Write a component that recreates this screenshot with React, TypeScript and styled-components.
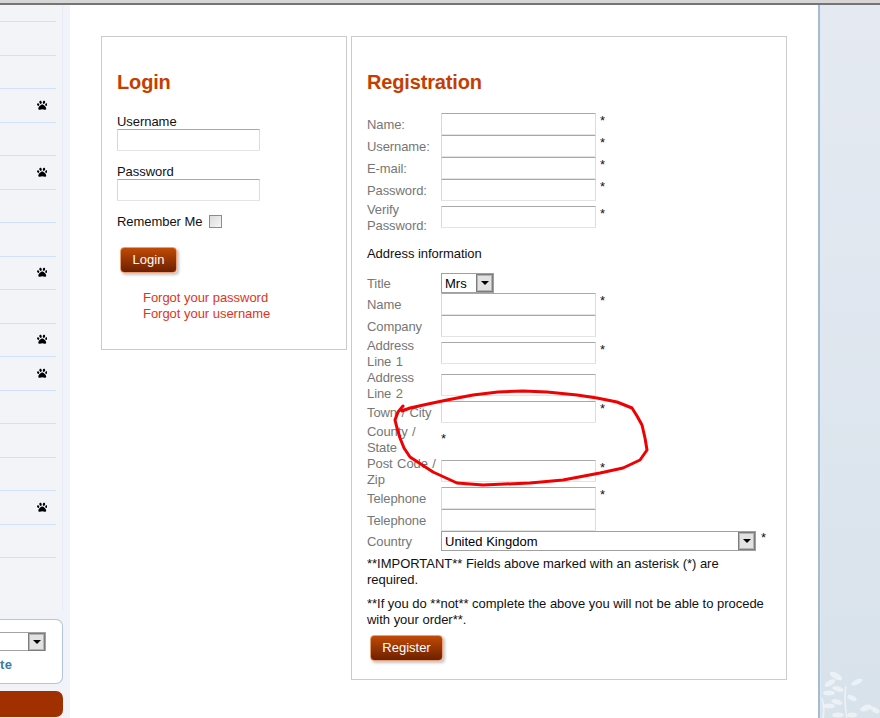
import React from "react";
import styled, { createGlobalStyle } from "styled-components";
import { FaPaw } from "react-icons/fa";

const Global = createGlobalStyle`
  html, body { margin: 0; padding: 0; background: #fff; overflow: hidden; }
  * { box-sizing: border-box; }
  #root { width: 880px; height: 718px; }
`;

const Page = styled.div`
  position: relative;
  width: 880px;
  height: 718px;
  display: flex;
  flex-direction: column;
  overflow: hidden;
  font-family: "Liberation Sans", Arial, sans-serif;
  font-size: 13px;
  line-height: 16px;
  color: #111;
`;

const TopBar = styled.div`
  flex: none;
  height: 5px;
  background: #d6d6d6;
  border-bottom: 2px solid #757575;
`;

const Body = styled.div`
  flex: 1;
  display: flex;
  min-height: 0;
`;

const Sidebar = styled.aside`
  flex: none;
  width: 70px;
  background: #f1f3f9;
  display: flex;
  flex-direction: column;
  overflow: hidden;
`;

const NavColumn = styled.div`
  width: 63px;
  height: 605px;
  flex: none;
  padding-top: 16px;
  background: #f2f4f8;
  border-right: 1px solid #e7ebf3;
`;

const NavList = styled.ul`
  list-style: none;
  margin: 0;
  padding: 0;
  width: 56px;
  border-top: 1px solid #d2e1fb;
`;

const NavRow = styled.li`
  height: 33.5px;
  border-bottom: 1px solid #d2e1fb;
  display: flex;
  align-items: center;
  justify-content: flex-end;
  padding-right: 9px;
  color: #000;
  font-size: 10.5px;
  & > svg { margin-bottom: 1px; }
`;

const Widget = styled.div`
  flex: none;
  width: 63px;
  height: 65px;
  margin-top: 9px;
  padding-top: 12px;
  background: #fff;
  border: 1px solid #b3c5d8;
  border-left: none;
  border-radius: 0 7px 7px 0;
`;

const WidgetSelect = styled.div`
  width: 46px;
  height: 19px;
  border: 1px solid #a3a3a3;
  border-left: none;
  display: flex;
  justify-content: flex-end;
`;

const WidgetLink = styled.div`
  margin-top: 6px;
  font-size: 13px;
  font-weight: 700;
  letter-spacing: 0.5px;
  color: #3a7aa8;
`;

const SideButton = styled.div`
  flex: none;
  width: 63px;
  height: 26px;
  margin-top: 7px;
  background: #a03000;
  border-radius: 0 7px 7px 0;
`;

const Main = styled.main`
  flex: 1;
  display: flex;
  align-items: flex-start;
  gap: 4px;
  padding: 31px 0 0 31px;
  background: #fff;
`;

const Panel = styled.section<{ $w: number; $h: number }>`
  flex: none;
  width: ${(p) => p.$w}px;
  height: ${(p) => p.$h}px;
  padding: 33px 15px 0;
  border: 1px solid #cbcbcb;
`;

const Heading = styled.h2`
  margin: 0;
  font-size: 20px;
  line-height: 24px;
  font-weight: 700;
  letter-spacing: -0.15px;
  color: #c63d00;
`;

const LoginLabel = styled.div<{ $top: number }>`
  height: 15px;
  margin-top: ${(p) => p.$top}px;
  color: #111;
  letter-spacing: -0.05px;
`;

const TextInput = styled.div<{ $w?: number }>`
  flex: none;
  width: ${(p) => p.$w ?? 155}px;
  height: 22px;
  background: #fff;
  border: 1px solid #e4e4e4;
  border-top-color: #a8a8a8;
  border-left-color: #d8d8d8;
  border-right-color: #dcdcdc;
  border-radius: 1px;
`;

const RememberRow = styled.div`
  margin-top: 12px;
  display: flex;
  align-items: center;
  gap: 7px;
  letter-spacing: -0.05px;
  & > span { position: relative; top: 1px; }
`;

const CheckBox = styled.div`
  width: 13px;
  height: 13px;
  background: linear-gradient(135deg, #dcdcdc, #f6f6f6);
  border: 1px solid #8c8c8c;
`;

const ActionButton = styled.div<{ $w: number; $left: number; $top: number }>`
  width: ${(p) => p.$w}px;
  height: 26px;
  margin-left: ${(p) => p.$left}px;
  margin-top: ${(p) => p.$top}px;
  display: flex;
  align-items: center;
  justify-content: center;
  color: #fff;
  background: linear-gradient(#c04a06, #6c2000);
  border: 1px solid #e8a078;
  border-radius: 4px;
  box-shadow: 2px 2px 3px #c4c4c4;
`;

const LinkList = styled.div`
  margin: 17px 0 0 26px;
  color: #e0351a;
  letter-spacing: -0.03px;
`;

const FormRow = styled.div<{ $h: number }>`
  height: ${(p) => p.$h}px;
  display: flex;
  align-items: center;
`;

const FieldLabel = styled.div`
  flex: none;
  width: 74px;
  margin-top: 2px;
  color: #767676;
  letter-spacing: -0.1px;
  word-spacing: 1px;
  white-space: nowrap;
`;

const Star = styled.span<{ $bare?: boolean }>`
  margin: ${(p) => (p.$bare ? "0" : "-6px 0 0 4px")};
  color: #111;
`;

const CountryStar = styled(Star)`
  margin-left: 5px;
`;

const SubHeading = styled.div`
  margin: 13px 0 11px;
  color: #111;
  letter-spacing: -0.05px;
`;

const SelectBox = styled.div<{ $w: number }>`
  flex: none;
  width: ${(p) => p.$w}px;
  height: 20px;
  padding-left: 3px;
  display: flex;
  align-items: center;
  justify-content: space-between;
  background: #fff;
  border: 1px solid #a0a0a0;
  color: #000;
  & > span { position: relative; top: 1px; }
`;

const ArrowBox = styled.div`
  flex: none;
  width: 17px;
  height: 18px;
  display: flex;
  align-items: center;
  justify-content: center;
  background: #e2e2e2;
  border: 1px solid #7c7c7c;
  outline: 1px solid #b4b4b4;
  outline-offset: -2px;
  &::after {
    content: "";
    border: 4px solid transparent;
    border-top: 4px solid #000;
    border-bottom: none;
  }
`;

const Note = styled.p<{ $top: number }>`
  margin: ${(p) => p.$top}px 0 0;
  color: #111;
  letter-spacing: -0.02px;
`;

const RightPanel = styled.aside`
  flex: none;
  width: 62px;
  display: flex;
  flex-direction: column;
  justify-content: flex-end;
  background: linear-gradient(#e5eaf2, #d8e2eb);
  border-left: 2px solid #a4bbd3;
  box-shadow: inset 1px 0 0 #dfe9f3;
`;

const Plant = styled.svg`
  display: block;
  width: 60px;
  height: 50px;
`;

const Scribble = styled.svg`
  position: absolute;
  left: 0;
  top: 0;
  pointer-events: none;
`;

const pawRows = new Set([2, 4, 7, 9, 10, 14]);

type Field = { label: React.ReactNode; h: number; star?: boolean; bareStar?: boolean };

const accountFields: Field[] = [
  { label: "Name:", h: 22, star: true },
  { label: "Username:", h: 22, star: true },
  { label: "E-mail:", h: 22, star: true },
  { label: "Password:", h: 22, star: true },
  { label: <>Verify<br />Password:</>, h: 32, star: true },
];

const Row = ({ label, h, star, bareStar }: Field) => (
  <FormRow $h={h}>
    <FieldLabel>{label}</FieldLabel>
    {bareStar ? <Star $bare>*</Star> : <TextInput />}
    {star && <Star>*</Star>}
  </FormRow>
);

const scribblePath =
  "M402 411 L410 408 L428 404 L447 400 L473 395 L498 392 L523 391 L547 392 L577 395 L597 398 L617 402 L632 408 L637 416 L642 425 L645 438 L647 450 L640 460 L623 468 L600 473 L563 480 L530 483 L483 485 L457 483 L433 472 L410 457 L404 448 L400 438 L397 428 L395 420 L398 412 L403 406";

export default function App() {
  return (
    <Page>
      <Global />
      <TopBar />
      <Body>
        <Sidebar>
          <NavColumn>
            <NavList>
              {Array.from({ length: 16 }, (_, i) => (
                <NavRow key={i}>{pawRows.has(i) && <FaPaw />}</NavRow>
              ))}
            </NavList>
          </NavColumn>
          <Widget>
            <WidgetSelect>
              <ArrowBox />
            </WidgetSelect>
            <WidgetLink>te</WidgetLink>
          </Widget>
          <SideButton />
        </Sidebar>
        <Main>
          <Panel $w={246} $h={314}>
            <Heading>Login</Heading>
            <LoginLabel $top={20}>Username</LoginLabel>
            <TextInput $w={143} />
            <LoginLabel $top={13}>Password</LoginLabel>
            <TextInput $w={143} />
            <RememberRow>
              <span>Remember Me</span> <CheckBox />
            </RememberRow>
            <ActionButton $w={57} $left={3} $top={18}>Login</ActionButton>
            <LinkList>
              <div>Forgot your password</div>
              <div>Forgot your username</div>
            </LinkList>
          </Panel>
          <Panel $w={436} $h={644}>
            <Heading>Registration</Heading>
            <div style={{ height: 19 }} />
            {accountFields.map((f, i) => <Row key={i} {...f} />)}
            <SubHeading>Address information</SubHeading>
            <FormRow $h={20}>
              <FieldLabel>Title</FieldLabel>
              <SelectBox $w={53}><span>Mrs</span><ArrowBox /></SelectBox>
            </FormRow>
            <Row label="Name" h={22} star />
            <Row label="Company" h={22} />
            <Row label={<>Address<br />Line 1</>} h={32} star />
            <Row label={<>Address<br />Line 2</>} h={32} />
            <Row label="Town / City" h={22} star />
            <Row label={<>County /<br />State</>} h={32} bareStar />
            <Row label={<>Post Code /<br />Zip</>} h={32} star />
            <Row label="Telephone" h={22} star />
            <Row label="Telephone" h={22} />
            <FormRow $h={20}>
              <FieldLabel>Country</FieldLabel>
              <SelectBox $w={315}><span>United Kingdom</span><ArrowBox /></SelectBox>
              <CountryStar>*</CountryStar>
            </FormRow>
            <Note $top={5}>**IMPORTANT** Fields above marked with an asterisk (*) are required.</Note>
            <Note $top={8}>**If you do **not** complete the above you will not be able to procede with your order**.</Note>
            <ActionButton $w={73} $left={3} $top={7}>Register</ActionButton>
          </Panel>
        </Main>
        <RightPanel>
          <Plant viewBox="0 0 60 50">
            <g fill="#fff" fillOpacity="0.5">
              <ellipse cx="16" cy="8" rx="7" ry="3" transform="rotate(30 16 8)" />
              <ellipse cx="10" cy="15" rx="6" ry="2.5" transform="rotate(-30 10 15)" />
              <ellipse cx="37" cy="14" rx="6" ry="2.5" transform="rotate(-25 37 14)" />
              <ellipse cx="18" cy="21" rx="6" ry="2.5" transform="rotate(15 18 21)" />
              <ellipse cx="9" cy="25" rx="6" ry="2.5" />
              <ellipse cx="32" cy="30" rx="5" ry="2.5" transform="rotate(25 32 30)" />
              <ellipse cx="17" cy="34" rx="6" ry="2.5" transform="rotate(15 17 34)" />
              <ellipse cx="9" cy="38" rx="6" ry="2.5" />
              <ellipse cx="46" cy="40" rx="6" ry="3" transform="rotate(-20 46 40)" />
              <ellipse cx="55" cy="42" rx="5" ry="2.5" transform="rotate(30 55 42)" />
              <ellipse cx="18" cy="47" rx="6" ry="2.5" />
              <ellipse cx="32" cy="47" rx="5" ry="2.5" />
              <path d="M1 30 Q4 38 2 50 L4 50 Q6 38 2 29 Z" />
              <path d="M25 18 Q23 32 26 50 L27.5 50 Q25 32 26.5 18 Z" />
            </g>
          </Plant>
        </RightPanel>
      </Body>
      <Scribble width="880" height="718" viewBox="0 0 880 718">
        <path
          d={scribblePath}
          fill="none"
          stroke="#f00000"
          strokeWidth="3"
          strokeLinecap="round"
          strokeLinejoin="round"
        />
      </Scribble>
    </Page>
  );
}
